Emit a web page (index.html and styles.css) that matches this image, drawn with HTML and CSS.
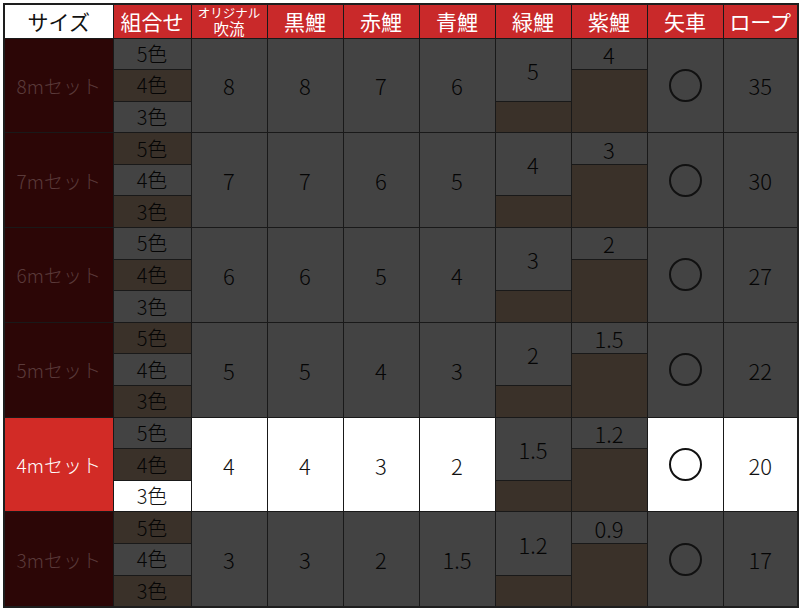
FILE: index.html
```html
<!DOCTYPE html>
<html lang="ja">
<head>
<meta charset="utf-8">
<title>サイズ表</title>
<link rel="stylesheet" href="styles.css">
</head>
<body>
<table class="chart">
  <colgroup>
    <col class="c-size"><col class="c-combo"><col class="c-n"><col class="c-n"><col class="c-n"><col class="c-n"><col class="c-n"><col class="c-n"><col class="c-n"><col class="c-rope">
  </colgroup>
  <thead>
    <tr class="head">
      <th class="h-size">サイズ</th>
      <th>組合せ</th>
      <th class="h-small"><span class="line l1">オリジナル</span><span class="line l2">吹流</span></th>
      <th>黒鯉</th>
      <th>赤鯉</th>
      <th>青鯉</th>
      <th>緑鯉</th>
      <th>紫鯉</th>
      <th>矢車</th>
      <th>ロープ</th>
    </tr>
  </thead>
  <tbody>
    <!-- 8m -->
    <tr>
      <td rowspan="3" class="size">8mセット</td>
      <td class="combo grey">5色</td>
      <td rowspan="3" class="num">8</td>
      <td rowspan="3" class="num">8</td>
      <td rowspan="3" class="num">7</td>
      <td rowspan="3" class="num">6</td>
      <td rowspan="2" class="num">5</td>
      <td class="num">4</td>
      <td rowspan="3" class="num"><span class="circle"></span></td>
      <td rowspan="3" class="num">35</td>
    </tr>
    <tr><td class="combo brown">4色</td><td rowspan="2" class="brown"></td></tr>
    <tr><td class="combo grey">3色</td><td class="brown"></td></tr>
    <!-- 7m -->
    <tr>
      <td rowspan="3" class="size">7mセット</td>
      <td class="combo brown">5色</td>
      <td rowspan="3" class="num">7</td>
      <td rowspan="3" class="num">7</td>
      <td rowspan="3" class="num">6</td>
      <td rowspan="3" class="num">5</td>
      <td rowspan="2" class="num">4</td>
      <td class="num">3</td>
      <td rowspan="3" class="num"><span class="circle"></span></td>
      <td rowspan="3" class="num">30</td>
    </tr>
    <tr><td class="combo grey">4色</td><td rowspan="2" class="brown"></td></tr>
    <tr><td class="combo brown">3色</td><td class="brown"></td></tr>
    <!-- 6m -->
    <tr>
      <td rowspan="3" class="size">6mセット</td>
      <td class="combo grey">5色</td>
      <td rowspan="3" class="num">6</td>
      <td rowspan="3" class="num">6</td>
      <td rowspan="3" class="num">5</td>
      <td rowspan="3" class="num">4</td>
      <td rowspan="2" class="num">3</td>
      <td class="num">2</td>
      <td rowspan="3" class="num"><span class="circle"></span></td>
      <td rowspan="3" class="num">27</td>
    </tr>
    <tr><td class="combo brown">4色</td><td rowspan="2" class="brown"></td></tr>
    <tr><td class="combo grey">3色</td><td class="brown"></td></tr>
    <!-- 5m -->
    <tr>
      <td rowspan="3" class="size">5mセット</td>
      <td class="combo brown">5色</td>
      <td rowspan="3" class="num">5</td>
      <td rowspan="3" class="num">5</td>
      <td rowspan="3" class="num">4</td>
      <td rowspan="3" class="num">3</td>
      <td rowspan="2" class="num">2</td>
      <td class="num">1.5</td>
      <td rowspan="3" class="num"><span class="circle"></span></td>
      <td rowspan="3" class="num">22</td>
    </tr>
    <tr><td class="combo grey">4色</td><td rowspan="2" class="brown"></td></tr>
    <tr><td class="combo brown">3色</td><td class="brown"></td></tr>
    <!-- 4m (selected) -->
    <tr>
      <td rowspan="3" class="size active">4mセット</td>
      <td class="combo grey">5色</td>
      <td rowspan="3" class="num white">4</td>
      <td rowspan="3" class="num white">4</td>
      <td rowspan="3" class="num white">3</td>
      <td rowspan="3" class="num white">2</td>
      <td rowspan="2" class="num">1.5</td>
      <td class="num">1.2</td>
      <td rowspan="3" class="num white"><span class="circle"></span></td>
      <td rowspan="3" class="num white">20</td>
    </tr>
    <tr><td class="combo brown">4色</td><td rowspan="2" class="brown"></td></tr>
    <tr><td class="combo white">3色</td><td class="brown"></td></tr>
    <!-- 3m -->
    <tr>
      <td rowspan="3" class="size">3mセット</td>
      <td class="combo brown">5色</td>
      <td rowspan="3" class="num">3</td>
      <td rowspan="3" class="num">3</td>
      <td rowspan="3" class="num">2</td>
      <td rowspan="3" class="num">1.5</td>
      <td rowspan="2" class="num">1.2</td>
      <td class="num">0.9</td>
      <td rowspan="3" class="num"><span class="circle"></span></td>
      <td rowspan="3" class="num">17</td>
    </tr>
    <tr><td class="combo grey">4色</td><td rowspan="2" class="brown"></td></tr>
    <tr><td class="combo brown">3色</td><td class="brown"></td></tr>
  </tbody>
</table>
</body>
</html>
```

FILE: styles.css
```css
html, body {
  margin: 0;
  padding: 0;
  background: #ffffff;
}
body {
  padding: 3px;
  font-family: "Noto Sans CJK JP", "Noto Sans", sans-serif;
}
.chart {
  border-collapse: collapse;
  table-layout: fixed;
  width: 794px;
  height: 604px;
  border: 2px solid #1e1e1e;
}
.c-size { width: 109px; }
.c-combo { width: 78px; }
.c-n { width: 76px; }
.c-rope { width: 75px; }
.chart th, .chart td {
  border: 1.5px solid #191919;
  padding: 0;
  text-align: center;
  vertical-align: middle;
}
.head { height: 34px; }
.head th {
  background: #c9292a;
  color: #ffffff;
  font-weight: 400;
  font-size: 21px;
  line-height: 1;
}
.head .h-size {
  background: #ffffff;
  color: #111111;
}
.line {
  display: block;
}
.l1 {
  font-size: 12.5px;
  line-height: 15px;
}
.l2 {
  font-size: 15.5px;
  line-height: 17px;
}
tbody tr { height: 31.6px; }
.size {
  background: #2c0606;
  color: #5a3a3a;
  font-size: 19px;
  font-weight: 300;
}
.size.active {
  background: #d22b26;
  color: #ffffff;
}
.combo {
  font-size: 20px;
  color: #050505;
  line-height: 1;
  font-weight: 300;
}
.num {
  background: #434343;
  color: #050505;
  font-size: 22px;
  line-height: 1;
  font-weight: 300;
}
.grey { background: #434343; }
.brown { background: #3a3129; }
.white, .num.white { background: #ffffff; color: #111111; }
.circle {
  display: inline-block;
  width: 29px;
  height: 29px;
  border: 2.6px solid #111111;
  border-radius: 50%;
  vertical-align: middle;
}
```
